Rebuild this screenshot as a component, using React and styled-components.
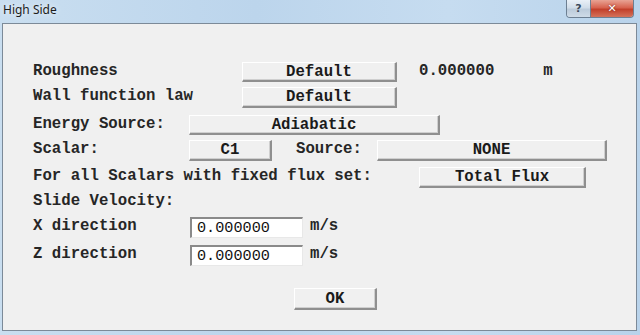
import React from 'react';
import styled, { createGlobalStyle } from 'styled-components';

const GlobalStyle = createGlobalStyle`
  html, body {
    margin: 0;
    padding: 0;
    width: 640px;
    height: 335px;
    overflow: hidden;
    background: #c4dbef;
  }
`;

const Window = styled.div`
  width: 640px;
  height: 335px;
  display: flex;
  flex-direction: column;
  background: linear-gradient(90deg, #c9def0 0%, #bcd5ec 40%, #c6dcf0 70%, #b9d3eb 100%);
  box-sizing: border-box;
`;

const TitleBar = styled.div`
  height: 23px;
  display: flex;
  align-items: flex-start;
  justify-content: space-between;
  padding: 0 6px 0 3px;
  flex-shrink: 0;
`;

const Title = styled.span`
  font-family: 'Noto Sans', 'Open Sans', sans-serif;
  font-size: 12px;
  line-height: 20px;
  color: #1c1c1c;
  text-shadow: 0 0 6px rgba(255, 255, 255, 0.9);
`;

const Caption = styled.div`
  display: flex;
  height: 17px;
  border: 1px solid #6d7f92;
  border-top: none;
  border-radius: 0 0 4px 4px;
  overflow: hidden;
`;

const CapButton = styled.div`
  width: ${(p) => p.$w}px;
  display: flex;
  align-items: center;
  justify-content: center;
  font-family: 'DejaVu Sans', sans-serif;
  font-weight: bold;
  font-size: 11px;
  color: ${(p) => (p.$close ? '#ffffff' : '#3b4a5c')};
  background: ${(p) =>
    p.$close
      ? 'linear-gradient(180deg, #e8a394 0%, #d7634f 45%, #c2402b 55%, #d4725a 100%)'
      : 'linear-gradient(180deg, #e9f0f7 0%, #d1dde9 45%, #bccbdb 55%, #cfdbe7 100%)'};
  border-left: ${(p) => (p.$close ? '1px solid #6d7f92' : 'none')};
  text-shadow: ${(p) => (p.$close ? '0 0 2px #6b1a0e' : 'none')};
`;

const Client = styled.div`
  margin: 0 3px 0 2px;
  height: 308px;
  background: #f0f0f0;
  border: 1px solid #7c8a98;
  box-sizing: border-box;
  padding: 38px 0 0 30px;
  display: flex;
  flex-direction: column;
  font-family: 'Liberation Mono', 'Courier New', monospace;
  font-size: 15.7px;
  font-weight: bold;
  color: #262626;
`;

const Row = styled.div`
  display: flex;
  align-items: center;
  height: ${(p) => p.$h || 21}px;
  margin-top: ${(p) => p.$mt || 0}px;
  white-space: pre;
`;

const Label = styled.span`
  width: ${(p) => (p.$w ? `${p.$w}px` : 'auto')};
  margin-left: ${(p) => p.$ml || 0}px;
  flex-shrink: 0;
  padding-bottom: 3px;
`;

const Button = styled.div`
  width: ${(p) => p.$w}px;
  height: 100%;
  box-sizing: border-box;
  flex-shrink: 0;
  display: flex;
  align-items: center;
  justify-content: center;
  background: #f0f0f0;
  border-top: 1px solid #ffffff;
  border-left: 1px solid #ffffff;
  border-right: 2px solid #8f8f8f;
  border-bottom: 2px solid #8f8f8f;
  box-shadow: inset -1px -1px 0 #cfcfcf;
  color: #1a1a1a;
`;

const Value = styled.span`
  margin-left: ${(p) => p.$ml || 0}px;
  padding-bottom: 3px;
`;

const Input = styled.div`
  width: 113px;
  height: 100%;
  box-sizing: border-box;
  flex-shrink: 0;
  background: #ffffff;
  border-top: 2px solid #8a8a8a;
  border-left: 2px solid #8a8a8a;
  border-right: 1px solid #e8e8e8;
  border-bottom: 1px solid #e8e8e8;
  padding-left: 5px;
  display: flex;
  align-items: center;
  font-weight: normal;
  font-size: 15.2px;
  color: #111;
`;

const Footer = styled.div`
  display: flex;
  justify-content: flex-start;
  padding-left: 261px;
  margin-top: 22px;
  height: 22px;
`;

const App = () => (
  <>
    <GlobalStyle />
    <Window>
      <TitleBar>
        <Title>High Side</Title>
        <Caption>
          <CapButton $w={23}>?</CapButton>
          <CapButton $w={42} $close>
            ✕
          </CapButton>
        </Caption>
      </TitleBar>
      <Client>
        <Row $h={20}>
          <Label $w={209}>Roughness</Label>
          <Button $w={155}>Default</Button>
          <Value $ml={22}>0.000000</Value>
          <Value $ml={49}>m</Value>
        </Row>
        <Row $mt={5}>
          <Label $w={209}>Wall function law</Label>
          <Button $w={155}>Default</Button>
        </Row>
        <Row $h={20} $mt={7}>
          <Label $w={156}>Energy Source:</Label>
          <Button $w={251}>Adiabatic</Button>
        </Row>
        <Row $mt={5}>
          <Label $w={156}>Scalar:</Label>
          <Button $w={83}>C1</Button>
          <Label $w={81} $ml={24}>
            Source:
          </Label>
          <Button $w={230}>NONE</Button>
        </Row>
        <Row $mt={6}>
          <Label $w={386}>For all Scalars with fixed flux set:</Label>
          <Button $w={167}>Total Flux</Button>
        </Row>
        <Row $mt={4}>
          <Label>Slide Velocity:</Label>
        </Row>
        <Row $mt={4}>
          <Label $w={157}>X direction</Label>
          <Input>0.000000</Input>
          <Value $ml={7}>m/s</Value>
        </Row>
        <Row $mt={7}>
          <Label $w={157}>Z direction</Label>
          <Input>0.000000</Input>
          <Value $ml={7}>m/s</Value>
        </Row>
        <Footer>
          <Button $w={83}>OK</Button>
        </Footer>
      </Client>
    </Window>
  </>
);

export default App;
